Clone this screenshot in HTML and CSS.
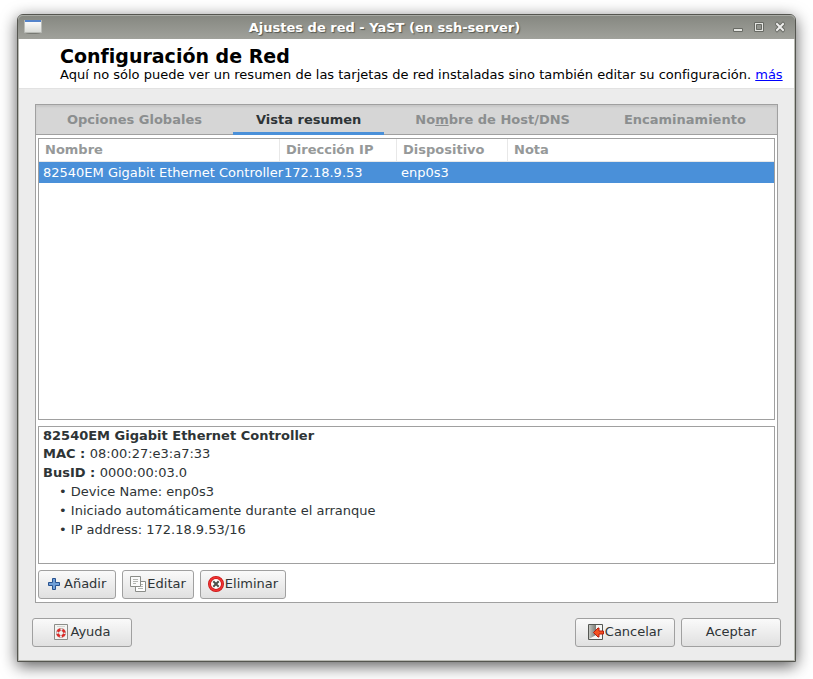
FILE: index.html
```html
<!DOCTYPE html>
<html lang="es">
<head>
<meta charset="utf-8">
<title>Ajustes de red - YaST</title>
<link rel="stylesheet" href="styles.css">
</head>
<body>
<main class="window">
  <header class="titlebar">
    <svg class="app-icon" width="18" height="14" viewBox="0 0 18 14" aria-hidden="true">
      <defs><linearGradient id="app" x1="0" y1="0" x2="0" y2="1"><stop offset="0" stop-color="#fff"/><stop offset="1" stop-color="#d9dbd7"/></linearGradient></defs>
      <ellipse cx="9" cy="13" rx="7" ry="1" fill="#777973"/>
      <path d="M.5.5h17v12H.5z" fill="url(#app)" stroke="#b9bbb6"/>
      <path d="M1 0h16v2H1z" fill="#5484cb"/>
    </svg>
    <span class="title">Ajustes de red - YaST (en ssh-server)</span>
    <div class="controls">
      <button type="button" aria-label="Minimizar"><svg width="10" height="12" viewBox="0 0 10 12"><path d="M.5 7.500h9v3h-9z" fill="#e4e5e1" stroke="#686a64"/></svg></button>
      <button type="button" aria-label="Maximizar"><svg width="10" height="12" viewBox="0 0 10 12"><path d="M.5 1.500h9v9h-9z" fill="#e4e5e1" stroke="#686a64"/><path d="M2.500 3.500h5v5h-5z" fill="#92948e" stroke="#686a64"/><path d="M1.500 2.500h7v7h-7z" fill="none" stroke="#e4e5e1"/></svg></button>
      <button type="button" aria-label="Cerrar"><svg width="10" height="12" viewBox="0 0 10 12"><path d="M2 3l6 6M8 3L2 9" stroke="#686a64" stroke-width="4" stroke-linecap="square"/><path d="M2 3l6 6M8 3L2 9" stroke="#eeeeec" stroke-width="2" stroke-linecap="square"/></svg></button>
    </div>
  </header>

  <section class="intro">
    <h1>Configuración de Red</h1>
    <p>Aquí no sólo puede ver un resumen de las tarjetas de red instaladas sino también editar su configuración. <a href="#mas">más</a></p>
  </section>

  <section class="notebook">
    <div class="tabs" role="tablist">
      <button type="button" class="tab" role="tab">Opciones Globales</button>
      <button type="button" class="tab tab-compact active" role="tab" aria-selected="true">Vista resumen</button>
      <button type="button" class="tab" role="tab">No<u>m</u>bre de Host/DNS</button>
      <button type="button" class="tab tab-compact" role="tab">Encaminamiento</button>
    </div>
    <div class="page">
      <div class="frame list">
        <table>
          <colgroup><col class="col-name"><col class="col-ip"><col class="col-device"><col></colgroup>
          <thead><tr><th>Nombre</th><th>Dirección IP</th><th>Dispositivo</th><th>Nota</th></tr></thead>
          <tbody><tr><td>82540EM Gigabit Ethernet Controller</td><td>172.18.9.53</td><td>enp0s3</td><td></td></tr></tbody>
        </table>
      </div>
      <div class="frame details">
        <p class="device"><b>82540EM Gigabit Ethernet Controller</b></p>
        <p><b>MAC : </b>08:00:27:e3:a7:33</p>
        <p><b>BusID : </b>0000:00:03.0</p>
        <ul>
          <li>Device Name: enp0s3</li>
          <li>Iniciado automáticamente durante el arranque</li>
          <li>IP address: 172.18.9.53/16</li>
        </ul>
      </div>
      <div class="actions">
        <button type="button" class="btn btn-add">
          <svg width="12" height="12" viewBox="0 0 12 12" aria-hidden="true"><path d="M4.500.5h3v4h4v3h-4v4h-3v-4h-4v-3h4z" fill="#6f9fd8" stroke="#27518f" stroke-linejoin="round"/></svg>
          Añadir</button>
        <button type="button" class="btn">
          <svg width="16" height="16" viewBox="0 0 16 16" aria-hidden="true"><path d="M5.500 5.500h10v10h-10z" fill="#fff" stroke="#8a8c88"/><path d="M8 12.500h5M11 8.500h2M11 10.500h2" stroke="#b4b6b2"/><path d="M.5.5h10v10H.5z" fill="#fafafa" stroke="#8a8c88"/><path d="M3 3.500h5M3 5.500h5M3 7.500h3" stroke="#b4b6b2"/></svg>
          Editar</button>
        <button type="button" class="btn">
          <svg width="16" height="16" viewBox="0 0 16 16" aria-hidden="true"><circle cx="8" cy="8" r="6.500" fill="#fff" stroke="#c81414" stroke-width="3"/><circle cx="8" cy="8" r="6.500" fill="none" stroke="#ef3434" stroke-width="1.500"/><path d="M6 6l4 4M10 6l-4 4" stroke="#4d504b" stroke-width="2" stroke-linecap="square"/></svg>
          Eliminar</button>
      </div>
    </div>
  </section>

  <footer class="footer">
    <button type="button" class="btn btn-wide">
      <svg width="16" height="16" viewBox="0 0 16 16" aria-hidden="true"><path d="M1.500.5h13v15h-13z" fill="#f4f4f2" stroke="#8b8d88"/><path d="M4 2.500h8" stroke="#d3d5d0"/><circle cx="8" cy="9" r="3.500" fill="#f4f4f2" stroke="#b9a5a3" stroke-width="3"/><circle cx="8" cy="9" r="3.500" fill="none" stroke="#f0eeec" stroke-width="1.500"/><circle cx="8" cy="9" r="3.500" fill="none" stroke="#dd2a27" stroke-width="2.500" stroke-dasharray="3.500 2" stroke-dashoffset="-1"/></svg>
      Ayuda</button>
    <div class="footer-end">
      <button type="button" class="btn btn-wide">
        <svg width="16" height="16" viewBox="0 0 16 16" aria-hidden="true"><defs><linearGradient id="door"><stop offset="0" stop-color="#c4c6c1"/><stop offset="1" stop-color="#777973"/></linearGradient></defs><path d="M.5.5h14v15H.5z" fill="#f5f5f3" stroke="#555753"/><path d="M1 1h7v10l-7 4z" fill="url(#door)"/><path d="M5.500 8.500L10 4h1v3h4.500v3H11v3h-1z" fill="#f4511f" stroke="#b81a0c" stroke-linejoin="round"/></svg>
        Cancelar</button>
      <button type="button" class="btn btn-wide">Aceptar</button>
    </div>
  </footer>
</main>
</body>
</html>
```
FILE: styles.css
```css
* { box-sizing: border-box; }

body {
  margin: 0;
  min-height: 100vh;
  display: flex;
  padding: 14px 17px 17px;
  background: #fff;
  color: #2e3436;
  font: 13px/19px "DejaVu Sans", sans-serif;
}

h1, p, ul { margin: 0; }
button { font: inherit; color: inherit; }

.window {
  flex: 1;
  min-width: 0;
  display: flex;
  flex-direction: column;
  background: #ececec;
  border: 1px solid #555650;
  border-radius: 6px 6px 0 0;
  box-shadow: inset 0 0 0 1px #b9bab3, 0 4px 16px rgba(0, 0, 0, .65);
}

.titlebar {
  display: grid;
  grid-template-columns: 60px 1fr 100px;
  align-items: center;
  height: 24px;
  padding: 0 10px 0 6px;
  background: linear-gradient(#858780, #a0a19b);
  border-radius: 5px 5px 0 0;
  box-shadow: inset 0 1px #a9aba5;
}

.title {
  color: #fff;
  font-weight: bold;
  text-align: center;
  text-shadow: 1px 1px 1px #555750;
}

.controls { display: flex; gap: 11px; justify-content: flex-end; }
.controls button { display: flex; padding: 0; border: 0; background: none; }

.intro {
  margin: 0 1px;
  padding: 7px 8px 5px 41px;
  background: #fff;
  border-bottom: 1px solid #e2e2e2;
  color: #000;
  line-height: 17px;
}

.intro h1 { font-size: 19px; line-height: 20px; }
.intro a { color: #00f; }

.notebook {
  flex: 1;
  display: flex;
  flex-direction: column;
  margin: 15px 17px;
  background: #fff;
  border: 1px solid #a0a0a0;
}

.tabs {
  display: flex;
  height: 30px;
  background: #d6d6d6;
  border-bottom: 1px solid #a0a0a0;
  box-shadow: inset 0 2px 2px #c8c8c8;
}

.tab {
  height: 30px;
  padding: 2px 31px 0;
  border: 0;
  border-bottom: 3px solid transparent;
  background: none;
  color: #8b8e8f;
  font-weight: bold;
}

.tab-compact { padding: 2px 23px 0; }
.tab.active { color: #2e3436; border-bottom-color: #4a90d9; }

.page {
  flex: 1;
  display: flex;
  flex-direction: column;
  gap: 6px;
  padding: 3px 2px;
}

.frame { background: #fff; border: 1px solid #a0a0a0; }
.list { flex: 1; }

table { width: 100%; table-layout: fixed; border-spacing: 0; }
.col-name { width: 241px; }
.col-ip { width: 117px; }
.col-device { width: 111px; }

th, td { height: 21px; padding: 0 4px; text-align: left; white-space: nowrap; }
th {
  height: 23px;
  padding: 0 6px 2px;
  color: #969999;
  border-right: 1px solid #e8e8e8;
  border-bottom: 1px solid #e8e8e8;
}
th:last-child { border-right: 0; }
td { background: #4a90d9; color: #fff; }

.details { height: 138px; padding: 0 4px; }
.details p { white-space: pre-wrap; }
.details .device { line-height: 17px; }
.details ul { padding: 0 0 0 16px; list-style: none; }
.details li::before { content: "• "; }

.actions { display: flex; gap: 6px; }

.btn {
  display: flex;
  align-items: center;
  justify-content: center;
  gap: 1px;
  height: 29px;
  padding: 0 7px 2px;
  border: 1px solid #a0a0a0;
  border-radius: 3px;
  background: linear-gradient(#fafafa, #e0e0e0);
}

.btn-add { gap: 4px; padding: 0 9px 2px; }
.btn-wide { width: 100px; }

.footer { display: flex; justify-content: space-between; padding: 0 14px; margin-bottom: 14px; }
.footer-end { display: flex; gap: 6px; }
```
